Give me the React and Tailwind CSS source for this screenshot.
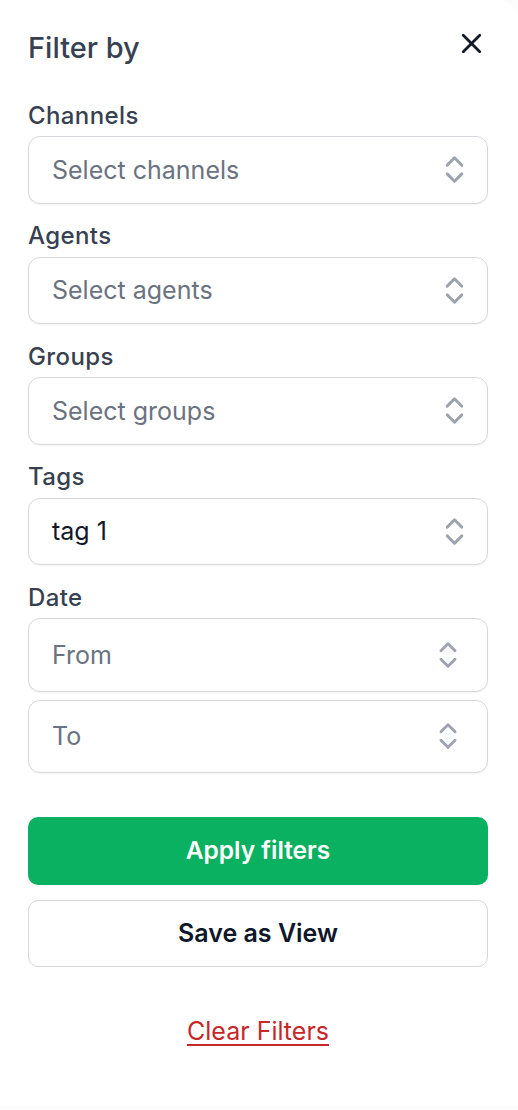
import React from 'react';
import { X, ChevronsUpDown } from 'lucide-react';

const fields = [
  { label: 'Channels', placeholder: 'Select channels' },
  { label: 'Agents', placeholder: 'Select agents' },
  { label: 'Groups', placeholder: 'Select groups' },
  { label: 'Tags', value: 'tag 1' },
];

function SelectBox({ placeholder, value }) {
  return (
    <div className="flex h-[67.5px] items-center justify-between rounded-[12px] border border-[#d6d8dc] bg-white pl-[23px] pr-[15px] shadow-[0_1px_2px_rgba(0,0,0,0.05)]">
      <span className={`text-[25px] leading-[32px] ${value ? 'text-[#111827]' : 'text-[#6b7280]'}`}>
        {value || placeholder}
      </span>
      <ChevronsUpDown size={35} strokeWidth={2} className="text-[#9ca3af]" />
    </div>
  );
}

function DateBox({ placeholder }) {
  return (
    <div className="flex h-[73.5px] items-center justify-between rounded-[12px] border border-[#d6d8dc] bg-white pl-[23px] pr-[22px] shadow-[0_1px_2px_rgba(0,0,0,0.05)]">
      <span className="text-[25px] leading-[32px] text-[#6b7280]">{placeholder}</span>
      <ChevronsUpDown size={34} strokeWidth={2} className="text-[#9ca3af]" />
    </div>
  );
}

function Label({ children }) {
  return (
    <div className="mb-[5.5px] pt-[2px] text-[24px] font-medium leading-[30px] tracking-[0.4px] text-[#374151]">
      {children}
    </div>
  );
}

export default function App() {
  return (
    <div className="min-h-[1110px] bg-[#fcfcfc] font-['Inter',sans-serif]">
      <div className="h-[1105px] rounded-tr-[20px] bg-white pl-[28px] pr-[30px] pt-[30px]">
        {/* Header */}
        <div className="flex items-start justify-between">
          <h2 className="m-0 text-[29px] font-medium leading-[36px] text-[#374151]">Filter by</h2>
          <X size={33} strokeWidth={2} className="mt-[-3px] text-[#111827]" />
        </div>

        {/* Fields */}
        <div className="mt-[32.5px] flex flex-col gap-[15.5px]">
          {fields.map((f) => (
            <div key={f.label}>
              <Label>{f.label}</Label>
              <SelectBox placeholder={f.placeholder} value={f.value} />
            </div>
          ))}
          <div>
            <Label>Date</Label>
            <div className="flex flex-col gap-[8px]">
              <DateBox placeholder="From" />
              <DateBox placeholder="To" />
            </div>
          </div>
        </div>

        {/* Actions */}
        <div className="mt-[44px] flex flex-col gap-[15px]">
          <button className="h-[67.5px] w-full rounded-[10px] bg-[#0ab161] text-[24.5px] font-semibold text-white">
            Apply filters
          </button>
          <button className="h-[67.5px] w-full rounded-[10px] border border-[#d6d8dc] bg-white text-[25px] font-semibold text-[#0f172a]">
            Save as View
          </button>
        </div>

        <div className="mt-[48px] text-center">
          <span className="text-[25px] leading-[32px] text-[#c8272a] underline underline-offset-[4px] decoration-[2px]">
            Clear Filters
          </span>
        </div>
      </div>
    </div>
  );
}
